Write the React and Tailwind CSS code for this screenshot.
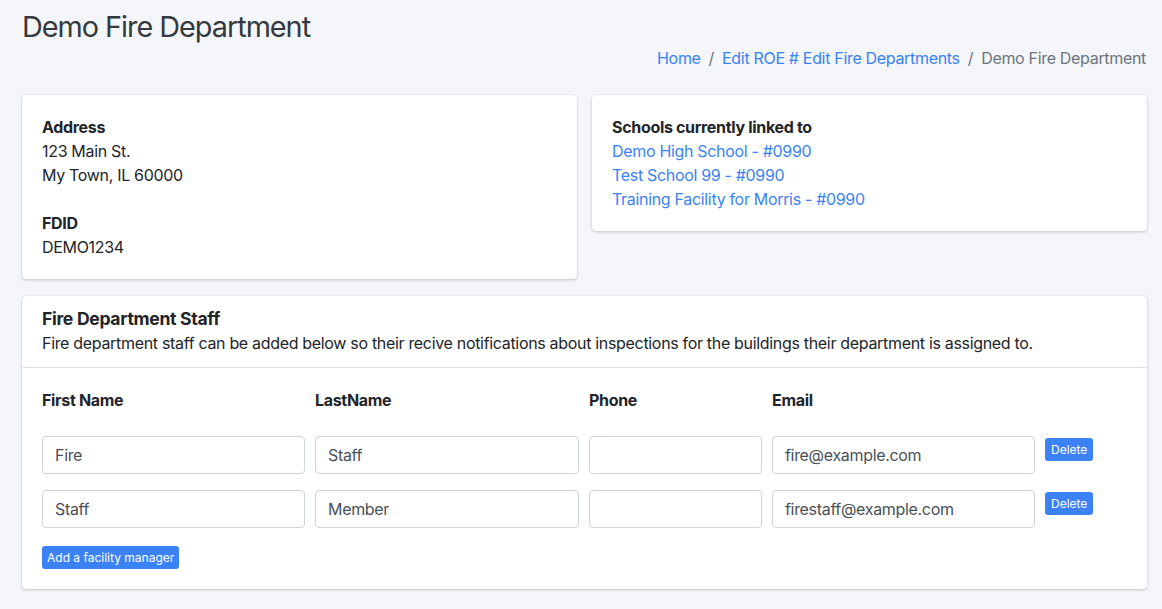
const staff = [
  { first: 'Fire', last: 'Staff', phone: '', email: 'fire@example.com' },
  { first: 'Staff', last: 'Member', phone: '', email: 'firestaff@example.com' },
]

const schools = ['Demo High School - #0990', 'Test School 99 - #0990', 'Training Facility for Morris - #0990']

function Field({ value }) {
  return (
    <input
      defaultValue={value}
      className="h-[38px] w-full rounded-[4px] border border-[#ced4da] bg-white px-3 text-base tracking-[-0.02em] text-[#495057] outline-none"
    />
  )
}

export default function App() {
  return (
    <div className="min-h-screen bg-[#f4f6f9] pl-[22px] pr-[15px] text-base leading-6 tracking-[-0.02em] text-[#212529]" style={{ fontFamily: 'Inter, "Noto Sans", sans-serif' }}>
      <div className="pt-[10px]">
        <h1 className="text-[28.8px] leading-[1.2] tracking-[-0.035em] text-[#343a40]">Demo Fire Department</h1>
        <div className="mt-px flex justify-end pr-px">
          <a className="text-[#3b82f6]">Home</a>
          <span className="px-2 text-[#6c757d]">/</span>
          <a className="text-[#3b82f6]">Edit ROE # Edit Fire Departments</a>
          <span className="px-2 text-[#6c757d]">/</span>
          <span className="text-[#6c757d]">Demo Fire Department</span>
        </div>
      </div>

      <div className="mt-[25px] flex items-start gap-[15px]">
        <div className="flex-1 rounded-[4px] bg-white p-5 shadow-[0_0_1px_rgba(0,0,0,0.125),0_1px_3px_rgba(0,0,0,0.2)]">
          <div className="font-bold">Address</div>
          <div>123 Main St.</div>
          <div>My Town, IL 60000</div>
          <div className="mt-6 font-bold">FDID</div>
          <div>DEMO1234</div>
        </div>
        <div className="flex-1 rounded-[4px] bg-white p-5 shadow-[0_0_1px_rgba(0,0,0,0.125),0_1px_3px_rgba(0,0,0,0.2)]">
          <div className="font-bold">Schools currently linked to</div>
          {schools.map(s => (
            <div key={s}><a className="text-[#3b82f6]">{s}</a></div>
          ))}
        </div>
      </div>

      <div className="mt-[17px] rounded-[4px] bg-white shadow-[0_0_1px_rgba(0,0,0,0.125),0_1px_3px_rgba(0,0,0,0.2)]">
        <div className="border-b border-[#dee2e6] px-5 pb-3 pt-[12px]">
          <h3 className="text-[17.6px] font-bold leading-[22px]">Fire Department Staff</h3>
          <p className="mt-px">Fire department staff can be added below so their recive notifications about inspections for the buildings their department is assigned to.</p>
        </div>
        <div className="p-5">
          <div className="grid grid-cols-[263px_264px_173px_263px_auto] gap-x-[10px] font-bold">
            <div>First Name</div>
            <div>LastName</div>
            <div>Phone</div>
            <div>Email</div>
            <div />
          </div>
          <div className="mt-6 flex flex-col gap-[16px]">
            {staff.map((p, i) => (
              <div key={i} className="grid grid-cols-[263px_264px_173px_263px_auto] items-start gap-x-[10px]">
                <Field value={p.first} />
                <Field value={p.last} />
                <Field value={p.phone} />
                <Field value={p.email} />
                <div className="pt-[2px]">
                  <button className="block rounded-[3px] bg-[#3b82f6] px-[6px] py-[2px] text-xs leading-[19px] tracking-normal text-white">Delete</button>
                </div>
              </div>
            ))}
          </div>
          <button className="mt-[18px] block rounded-[3px] bg-[#3b82f6] px-[5px] py-[2px] text-xs leading-[19px] tracking-normal text-white">Add a facility manager</button>
        </div>
      </div>
    </div>
  )
}
